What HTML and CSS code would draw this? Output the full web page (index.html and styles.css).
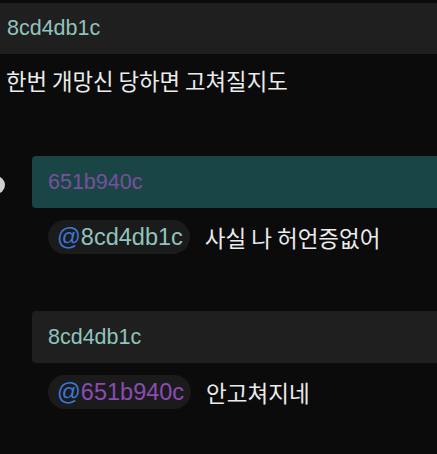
FILE: index.html
```html
<!DOCTYPE html>
<html>
    <head>
        <meta charset="utf-8">
        <title>Thread</title>
        <meta name="viewport" content="width=device-width, initial-scale=1">
        <link rel="stylesheet" href="styles.css">
    </head>
    <body>
        <div class="thread">
            <div class="top-bar">
                <span class="name teal">8cd4db1c</span>
            </div>
            <div class="post">한번 개망신 당하면 고쳐질지도</div>

            <div class="msg">
                <span class="dot"></span>
                <div class="reply-card active">
                    <span class="name purple">651b940c</span>
                </div>
                <div class="msg-body">
                    <span class="chip"><span class="at">@</span><span class="teal">8cd4db1c</span></span>
                    <span class="text">사실 나 허언증없어</span>
                </div>
            </div>

            <div class="msg second">
                <div class="reply-card">
                    <span class="name teal">8cd4db1c</span>
                </div>
                <div class="msg-body">
                    <span class="chip"><span class="at">@</span><span class="purple-bright">651b940c</span></span>
                    <span class="text">안고쳐지네</span>
                </div>
            </div>
        </div>
    </body>
</html>
```

FILE: styles.css
```css
body{
    margin: 0;
    background-color: #0b0b0b;
    color: #ececec;
    font-family: "Liberation Sans", "Noto Sans CJK KR", sans-serif;
    font-size: 21.5px;
    overflow: hidden;
}
.thread{
    display: flex;
    flex-direction: column;
}
.top-bar{
    margin-top: 3px;
    height: 51px;
    background-color: #1f1f1f;
    display: flex;
    align-items: center;
    padding-left: 7px;
}
.teal{
    color: #8fc4be;
}
.purple{
    color: #7a4f9f;
}
.purple-bright{
    color: #8a4cb4;
}
.post{
    padding: 11px 6px 0;
    line-height: 30px;
    font-family: "Noto Sans CJK KR", sans-serif;
    font-size: 22.3px;
}
.msg{
    position: relative;
    margin-top: 61px;
    padding-left: 32px;
}
.msg.second{
    margin-top: 57px;
}
.dot{
    position: absolute;
    left: -13px;
    top: 20px;
    width: 18px;
    height: 18px;
    border-radius: 50%;
    background-color: #cfcfcf;
}
.reply-card{
    height: 52px;
    background-color: #1f1f1f;
    border-radius: 4px 0 0 4px;
    display: flex;
    align-items: center;
    padding-left: 16px;
}
.reply-card.active{
    background-color: #194644;
}
.msg-body{
    display: flex;
    align-items: center;
    gap: 15px;
    margin-top: 12px;
    padding-left: 16px;
}
.chip{
    height: 34px;
    display: flex;
    align-items: center;
    padding: 0 7px 0 9px;
    border-radius: 17px;
    background-color: #1b1b1b;
    font-size: 23.5px;
}
.at{
    color: #3b78d6;
}
.text{
    font-family: "Noto Sans CJK KR", sans-serif;
    font-size: 22.5px;
}
```
